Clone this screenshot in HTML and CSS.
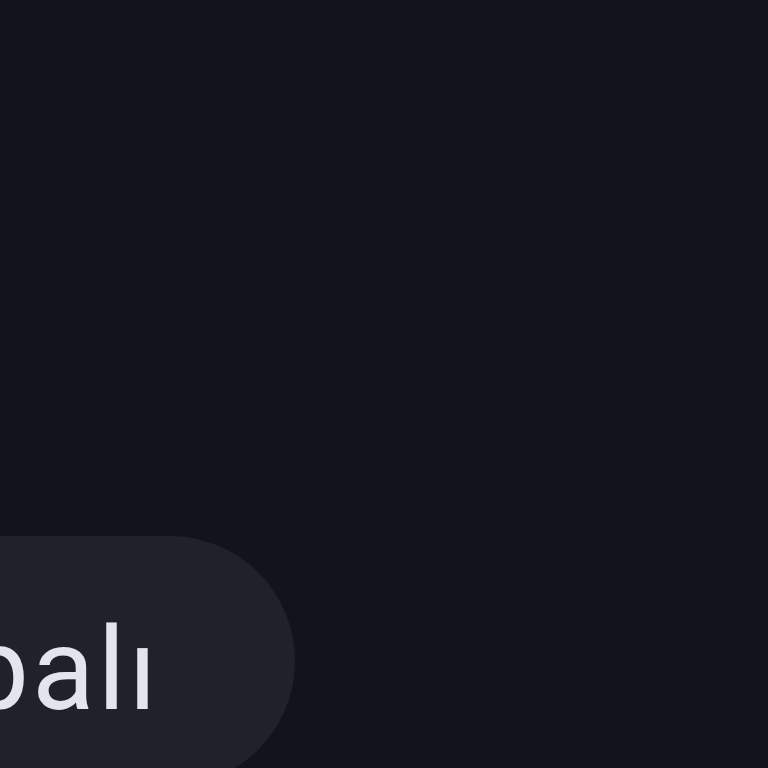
FILE: index.html
```html
<!DOCTYPE html>
<html lang="tr">
<head>
    <meta charset="UTF-8">
    <meta name="viewport" content="width=device-width, initial-scale=1.0">
    <title>Ayar</title>
    <link rel="stylesheet" href="styles.css">
</head>
<body>

<div class="screen">
    <div class="spacer"></div>
    <!-- Status chip -->
    <div class="chip">
        <span class="chip-label">Kapalı</span>
    </div>
</div>

</body>
</html>
```

FILE: styles.css
```css
html, body {
    margin: 0;
    padding: 0;
    height: 100%;
    background-color: #11141d;
    overflow: hidden;
}
.screen {
    display: flex;
    flex-direction: column;
    height: 768px;
}
.spacer {
    height: 536px;
    flex-shrink: 0;
}
.chip {
    flex-shrink: 0;
    width: 600px;
    height: 250px;
    margin-left: -305px;
    border-radius: 125px;
    background-color: #1f222b;
    box-sizing: border-box;
    padding: 76px 135px 0 0;
    text-align: right;
}
.chip-label {
    font-family: Roboto, "Noto Sans", sans-serif;
    font-size: 115px;
    line-height: 115px;
    letter-spacing: 3px;
    color: #e3e5ec;
    display: block;
}
```
